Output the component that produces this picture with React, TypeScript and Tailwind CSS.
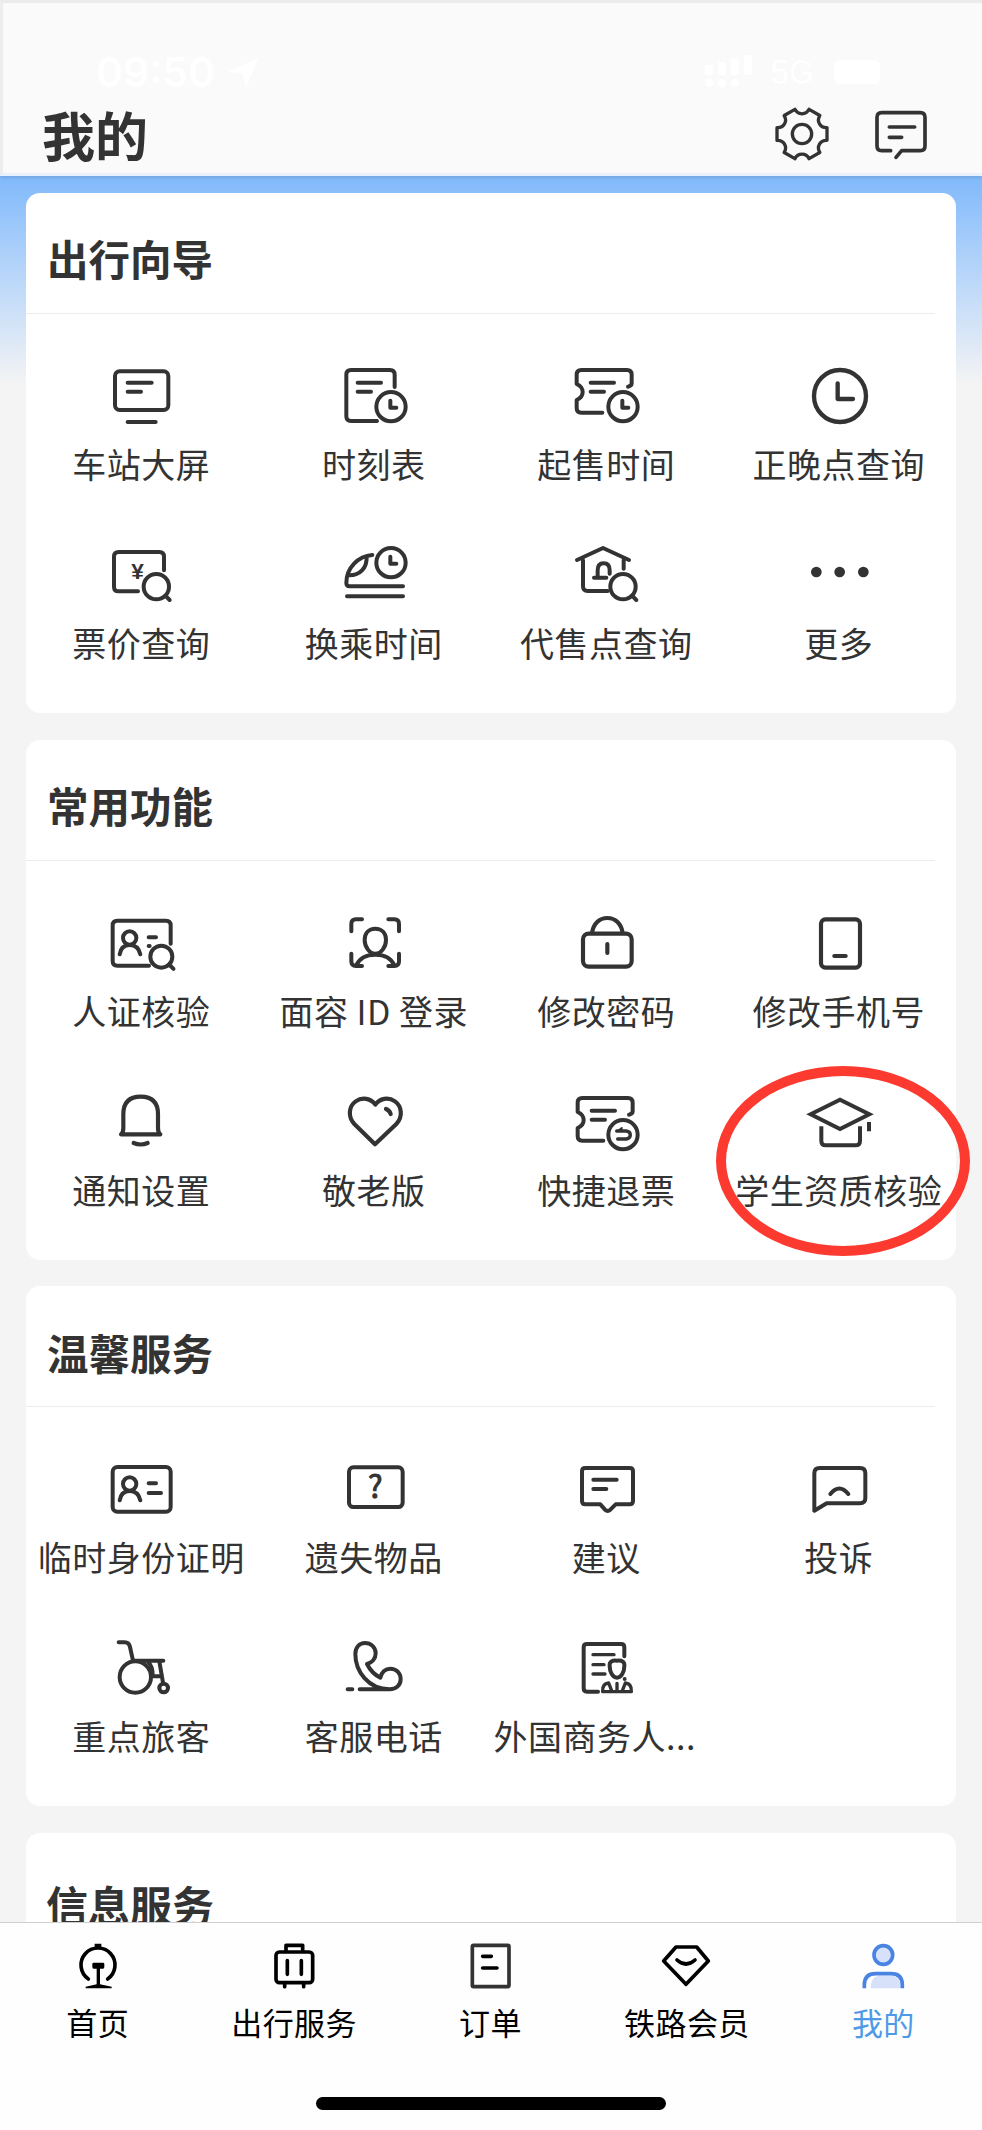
import type { ReactNode } from "react";

interface Item {
  label: string;
  icon: ReactNode;
  marked?: boolean;
}

interface Section {
  title: string;
  items: Item[];
}

// Small clock that sits on the lower right corner of several icons
const MiniClock = ({ y = 152 }: { y?: number }) => (
  <>
    <circle cx="168" cy={y} r="44" />
    <path d={`M166 ${y - 18}v21h18`} />
  </>
);

const Magnifier = ({ x, y, r = 38 }: { x: number; y: number; r?: number }) => (
  <>
    <circle cx={x} cy={y} r={r} />
    <path d={`M${x + r * 0.71} ${y + r * 0.71}l13 13`} />
  </>
);

const Ticket = () => (
  <>
    <path d="M183 92q11 -2 11 -10V56q0 -14 -14 -14H43q-14 0 -14 14v28q18 8 18 24t-18 24v24q0 14 14 14h63" />
    <path d="M71 80h70M71 107h40" />
  </>
);

const Person = () => (
  <>
    <circle cx="83" cy="105" r="20" />
    <path d="M53 154c3 -18 14 -28 30 -28s28 10 32 28" />
  </>
);

const sections: Section[] = [
  {
    title: "出行向导",
    items: [
      {
        label: "车站大屏",
        icon: (
          <>
            <rect x="39" y="46" width="160" height="116" rx="14" />
            <path d="M77 80h72M77 107h40M77 198h84" />
          </>
        ),
      },
      {
        label: "时刻表",
        icon: (
          <>
            <path d="M179 93V56q0 -14 -14 -14H48q-14 0 -14 14v125q0 14 14 14h78" />
            <path d="M68 80h70M68 107h40" />
            <MiniClock />
          </>
        ),
      },
      {
        label: "起售时间",
        icon: (
          <>
            <Ticket />
            <MiniClock />
          </>
        ),
      },
      {
        label: "正晚点查询",
        icon: (
          <g strokeWidth="13">
            <circle cx="120" cy="120" r="78" />
            <path d="M113 82v47h46" />
          </g>
        ),
      },
      {
        label: "票价查询",
        icon: (
          <>
            <path d="M186 106V65q0 -14 -14 -14H50q-14 0 -14 14v90q0 14 14 14h58" />
            <text x="107" y="132" textAnchor="middle" fontSize="68" fontWeight="700" fontFamily="Liberation Sans, sans-serif" fill="#333" stroke="none">
              ¥
            </text>
            <Magnifier x={163} y={155} />
          </>
        ),
      },
      {
        label: "换乘时间",
        icon: (
          <>
            <path d="M112 60C70 63 34 98 34 144q0 10 10 10h160M36 184h168" />
            <path d="M95 66c1 32 -19 55 -52 55" />
            <MiniClock y={83} />
          </>
        ),
      },
      {
        label: "代售点查询",
        icon: (
          <>
            <path d="M30 75l78 -36 78 36M170 75v26M48 76v78q0 14 14 14h60" />
            <path d="M92 128v-22q0 -21 18 -21t18 21v10M81 128h37" />
            <Magnifier x={168} y={155} />
          </>
        ),
      },
      {
        label: "更多",
        icon: (
          <g fill="#333" stroke="none">
            <circle cx="49" cy="111" r="16" />
            <circle cx="119" cy="111" r="16" />
            <circle cx="190" cy="111" r="16" />
          </g>
        ),
      },
    ],
  },
  {
    title: "常用功能",
    items: [
      {
        label: "人证核验",
        icon: (
          <>
            <path d="M206 122V67q0 -14 -14 -14H46q-14 0 -14 14v107q0 14 14 14h95" />
            <Person />
            <path d="M140 103h22M140 129h3" />
            <Magnifier x={178} y={161} r={33} />
          </>
        ),
      },
      {
        label: "面容 ID 登录",
        icon: (
          <>
            <path d="M49 85V63q0 -14 14 -14h18M160 49h18q14 0 14 14v22M49 152v23q0 14 14 14h18M160 189h18q14 0 14 -14v-23" />
            <path d="M121 77c20 0 32 14 32 34s-14 41 -32 41 -32 -21 -32 -41 12 -34 32 -34z" />
            <path d="M64 187c9 -21 31 -32 57 -32s48 11 57 32" />
          </>
        ),
      },
      {
        label: "修改密码",
        icon: (
          <g strokeWidth="12.5">
            <rect x="48" y="92" width="146" height="99" rx="17" />
            <path d="M75 90c4 -28 22 -45 46 -45s42 17 46 45M121 123v27" />
          </g>
        ),
      },
      {
        label: "修改手机号",
        icon: (
          <g strokeWidth="12.5">
            <rect x="63" y="49" width="117" height="145" rx="13" />
            <path d="M103 159h34" />
          </g>
        ),
      },
      {
        label: "通知设置",
        icon: (
          <g strokeWidth="12.5">
            <path d="M57 157q7 -5 7 -19V97q0 -53 52 -53t52 53v41q0 14 7 19z" />
            <path d="M95 183q21 9 42 0" />
          </g>
        ),
      },
      {
        label: "敬老版",
        icon: (
          <g strokeWidth="12.5">
            <path d="M120 187L58 126C38 104 41 73 62 58c20 -14 46 -9 59 10 13 -19 39 -24 59 -10 21 15 24 46 4 68z" />
            <path d="M153 81q11 4 14 15" />
          </g>
        ),
      },
      {
        label: "快捷退票",
        icon: (
          <>
            <g transform="translate(3 6)">
              <Ticket />
            </g>
            <circle cx="168" cy="158" r="44" />
            <path d="M149 147h29q12 2 12 12t-12 12h-26" strokeWidth="10" />
            <path d="M150 147l15 -10v10z" strokeWidth="4" fill="#333" />
          </>
        ),
      },
      {
        label: "学生资质核验",
        marked: true,
        icon: (
          <>
            <path d="M32 97l88 -44 88 44 -88 44z" strokeLinejoin="miter" />
            <path d="M64 133v43q0 14 14 14h88q14 0 14 -14v-43M207 120v28" strokeLinecap="butt" />
          </>
        ),
      },
    ],
  },
  {
    title: "温馨服务",
    items: [
      {
        label: "临时身份证明",
        icon: (
          <>
            <rect x="32" y="54" width="174" height="134" rx="14" />
            <Person />
            <path d="M140 103h22M140 132h37" />
          </>
        ),
      },
      {
        label: "遗失物品",
        icon: (
          <>
            <rect x="42" y="55" width="161" height="119" rx="13" />
            <text x="121" y="147" textAnchor="middle" fontSize="92" fontFamily="Noto Sans CJK SC, sans-serif" fill="#333" strokeWidth="3">
              ?
            </text>
          </>
        ),
      },
      {
        label: "建议",
        icon: (
          <>
            <path d="M55 57h133q10 0 10 10v89q0 10 -10 10h-42l-16 16q-8 7 -16 0l-14 -16H55q-10 0 -10 -10V67q0 -10 10 -10z" />
            <path d="M79 92h70M79 120h39" />
          </>
        ),
      },
      {
        label: "投诉",
        icon: (
          <>
            <path d="M43 185V73q0 -16 16 -16h121q16 0 16 16v74q0 16 -16 16H80z" />
            <path d="M91 135q27 -33 54 0" />
          </>
        ),
      },
      {
        label: "重点旅客",
        icon: (
          <>
            <path d="M50 43h18q13 0 16 14l9 41h91" />
            <circle cx="100" cy="147" r="47" />
            <path d="M172 100l11 64M149 145h30M138 102q14 12 14 40" />
            <circle cx="185" cy="180" r="13" />
          </>
        ),
      },
      {
        label: "客服电话",
        icon: (
          <path d="M74 184h90C100 184 61 130 61 78c0 -20 12 -33 29 -33 18 0 32 13 32 31 0 16 -11 28 -26 32 8 16 22 32 40 41 4 -16 14 -27 30 -27 18 0 31 14 31 31 0 18 -13 31 -33 31M38 184h14" />
        ),
      },
      {
        label: "外国商务人...",
        icon: (
          <>
            <path d="M172 85V58q0 -10 -10 -10H60q-10 0 -10 10v123q0 10 10 10h33" />
            <path d="M78 80h63M78 110h33M78 138h36" strokeWidth="10" />
            <path d="M150 98q24 -2 22 16c0 18 -9 35 -22 35s-22 -17 -22 -35q-2 -18 22 -16z" />
            <path d="M107 191q-2 -24 18 -26l10 26zM193 191q2 -24 -18 -26l-10 26zM150 166v25M107 191h86" strokeWidth="10" />
            <circle cx="173" cy="153" r="6" fill="#333" stroke="none" />
          </>
        ),
      },
    ],
  },
];

const tabs: Item[] = [
  {
    label: "首页",
    icon: (
      <>
        <path d="M61 129a51 51 0 1 1 58 0" />
        <path d="M80 23h20v14H80zM77 80h28q4 0 4 4v8q0 6 -4 6h-9v47l35 7v5H53v-5l33 -7V98h-9q-4 0 -4 -6v-8q0 -4 4 -4z" fill="currentColor" stroke="none" />
      </>
    ),
  },
  {
    label: "出行服务",
    icon: (
      <>
        <rect x="33" y="48" width="110" height="92" rx="10" />
        <path d="M63 44V28h50v16M67 74v41M109 74v41M59 142v10M116 142v10" />
      </>
    ),
  },
  {
    label: "订单",
    icon: (
      <>
        <rect x="34" y="28" width="110" height="124" rx="4" stroke="#333" />
        <path d="M65 61h26M65 96h43" />
      </>
    ),
  },
  {
    label: "铁路会员",
    icon: <path d="M57 33h62l35 42 -67 70 -67 -70zM60 72q27 24 54 0" />,
  },
  {
    label: "我的",
    icon: (
      <g stroke="#4a84e2" strokeLinecap="butt">
        <circle cx="88" cy="57" r="28" fill="#d7e2fa" />
        <path d="M50 157q0 -38 30 -38h30q30 0 30 38z" fill="#d7e2fa" stroke="none" />
        <path d="M31 157v-10q0 -34 34 -34h46q34 0 34 34v10" />
      </g>
    ),
  },
];

const ServiceItem = ({ item }: { item: Item }) => (
  <div className="relative flex h-[179px] flex-col items-center">
    <svg viewBox="0 0 240 240" className="size-20" fill="none" stroke="#333" strokeWidth="12" strokeLinecap="round" strokeLinejoin="round">
      {item.icon}
    </svg>
    <p
      className={
        item.label.endsWith("...")
          ? "mt-[3px] pr-[25px] text-[34px] leading-[50px] tracking-[0.5px] whitespace-nowrap text-[#333]"
          : "mt-[3px] pr-[2px] text-[34px] leading-[50px] tracking-[0.5px] whitespace-nowrap text-[#333]"
      }
    >
      {item.label}
    </p>
    {item.marked && (
      <span className="absolute -top-[16px] -left-[8px] h-[190px] w-[254px] rounded-[50%] border-10 border-[#fd3a30]" />
    )}
  </div>
);

const SectionCard = ({ section }: { section: Section }) => (
  <section className="h-[520px] shrink-0 rounded-[14px] bg-white">
    <div className="mr-[21px] flex h-[121px] items-center border-b border-[#ececec] pt-3 pl-[21px]">
      <h2 className="text-[41.5px] leading-none font-bold text-[#333]">{section.title}</h2>
    </div>
    <div className="grid grid-cols-4 pt-[42px]">
      {section.items.map(item => (
        <ServiceItem item={item} key={item.label} />
      ))}
    </div>
  </section>
);

const StatusBar = () => (
  <div className="flex h-[100px] items-end justify-between pr-[102px] pb-[10px] pl-[93px] text-white">
    <div className="flex items-center gap-3">
      <span className="font-[Inter] text-[41px] leading-none font-semibold">09:50</span>
      <svg viewBox="0 0 32 32" className="size-8" fill="currentColor">
        <path d="M31 1L1 15l15 2 3 14z" />
      </svg>
    </div>
    <div className="flex items-center gap-4 pb-1">
      <svg viewBox="0 0 48 34" className="h-[34px] w-12" fill="currentColor">
        <rect x="0" y="10" width="8" height="10" rx="2" />
        <rect x="13" y="7" width="8" height="13" rx="2" />
        <rect x="26" y="4" width="8" height="16" rx="2" />
        <rect x="39" y="0" width="8" height="20" rx="2" />
        <circle cx="4" cy="28" r="4" />
        <circle cx="17" cy="28" r="4" />
        <circle cx="30" cy="28" r="4" />
      </svg>
      <span className="font-[Inter] text-[33px] leading-none">5G</span>
      <span className="ml-1 h-6 w-[46px] rounded-md bg-white" />
    </div>
  </div>
);

export default function App() {
  return (
    <div className="flex h-[2130px] w-[982px] flex-col overflow-hidden bg-[#f4f4f4] font-['Noto_Sans_CJK_SC',sans-serif]">
      <header className="z-10 h-[176px] shrink-0 border-t-[3px] border-b-[3px] border-l-[3px] border-t-[#ebebeb] border-b-[#e9f2fc] border-l-[#ededed] bg-[#fafafa] shadow-[0_1px_4px_rgba(0,0,0,0.15)]">
        <StatusBar />
        <div className="-mt-[3px] flex h-[68px] items-center pr-[51px] pl-[39px] text-[#333]">
          <h1 className="flex-1 text-[53px] leading-none font-bold">我的</h1>
          <svg viewBox="0 0 180 180" className="mr-[39px] size-[60px]" fill="none" stroke="currentColor" strokeWidth="10" strokeLinejoin="round">
            <path d="M165 71V109C144.500 107.700 132.600 128.300 143.500 145.400L111.200 164C102 146 78 146 68.800 164L36.500 145.400C47.400 128.300 35.500 107.700 15 109V71C35.500 72.300 47.400 51.700 36.500 34.600L68.800 16C78 34 102 34 111.200 16L143.500 34.600C132.600 51.700 144.500 72.300 165 71z" />
            <circle cx="90" cy="90" r="29" />
          </svg>
          <svg viewBox="0 0 180 180" className="size-[60px]" fill="none" stroke="currentColor" strokeWidth="11" strokeLinecap="round" strokeLinejoin="round">
            <path d="M59 140H32q-14 0 -14 -14V40q0 -14 14 -14h116q14 0 14 14v86q0 14 -14 14H92l-17 20M55 69h76M55 100h37" />
          </svg>
        </div>
      </header>

      <main className="min-h-0 flex-1 overflow-hidden bg-linear-to-b from-[#80b9fb] to-[#f4f4f4] to-[208px] px-[26px] pt-[17px]">
        <div className="flex flex-col gap-[26.700px]">
          {sections.map(section => (
            <SectionCard section={section} key={section.title} />
          ))}
          <section className="h-[100px] rounded-t-[14px] bg-white pt-[50px] pl-5">
            <h2 className="text-[42px] leading-none font-bold text-[#333]">信息服务</h2>
          </section>
        </div>
      </main>

      <nav className="z-10 flex h-[208px] shrink-0 flex-col border-t border-[#cfcfcf] bg-[#fefefe]">
        <div className="grid grid-cols-5 pt-[13px]">
          {tabs.map((tab, i) => (
            <div className="flex flex-col items-center text-black" key={tab.label}>
              <svg viewBox="0 0 180 180" className="size-[60px]" fill="none" stroke="currentColor" strokeWidth="11" strokeLinecap="round" strokeLinejoin="round">
                {tab.icon}
              </svg>
              <span
                className={
                  i === 4
                    ? "mt-0.5 pr-px text-[31px] leading-[48px] tracking-[0.4px] text-[#4f9ae6]"
                    : "mt-0.5 pr-px text-[31px] leading-[48px] tracking-[0.4px]"
                }
              >
                {tab.label}
              </span>
            </div>
          ))}
        </div>
        <div className="mx-auto mt-[51px] h-[13px] w-[350px] rounded-full bg-black" />
      </nav>
    </div>
  );
}
